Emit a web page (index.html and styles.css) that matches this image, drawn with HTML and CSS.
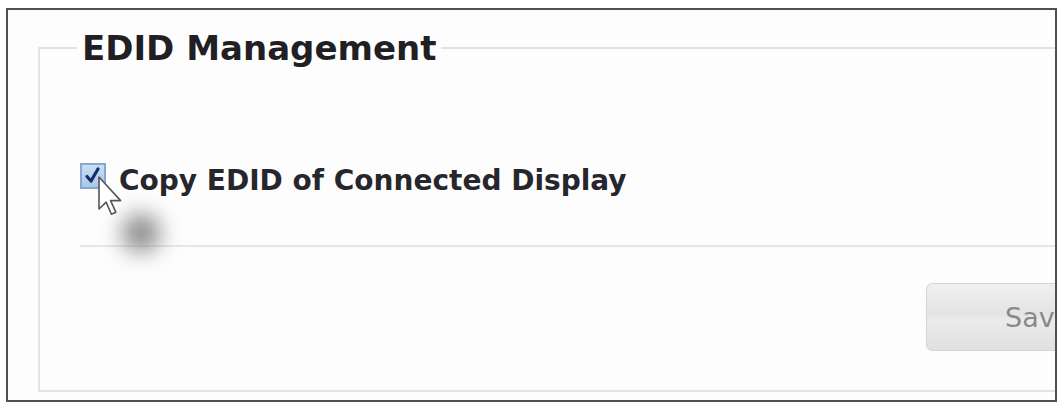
FILE: index.html
```html
<!DOCTYPE html>
<html lang="en">
<head>
  <meta charset="UTF-8">
  <title>EDID Management</title>
  <link rel="stylesheet" href="styles.css">
</head>
<body>
  <div class="frame">
    <fieldset class="panel">
      <legend>EDID Management</legend>

      <label class="option">
        <span class="check">
          <svg width="22" height="22" viewBox="0 0 22 22">
            <path d="M5 11.5 L9 16 L16 4" fill="none" stroke="#1b2c6e" stroke-width="3.2" stroke-linecap="round" stroke-linejoin="round"/>
          </svg>
        </span>
        <span class="option-text">Copy EDID of Connected Display</span>
      </label>

      <div class="divider"></div>

      <div class="actions">
        <button class="save">Save</button>
      </div>
    </fieldset>

    <!-- mouse pointer resting over the checkbox -->
    <div class="pointer-shadow"></div>
    <svg class="pointer" width="28" height="44" viewBox="0 0 14 22">
      <path d="M1 1 L1 17 L4.6 13.6 L7.2 19.6 L9.4 18.6 L6.8 12.8 L11.8 12.8 Z" fill="#fff" stroke="#555" stroke-width="0.8" stroke-linejoin="round"/>
    </svg>
  </div>
</body>
</html>
```

FILE: styles.css
```css
body {
  margin: 0;
  background: #fff;
  font-family: "DejaVu Sans", Verdana, sans-serif;
  color: #222;
}

.frame {
  position: relative;
  box-sizing: border-box;
  width: 1051px;
  height: 394px;
  margin: 8px 0 0 6px;
  padding: 18px 0 0 30px;
  border: 2px solid #505050;
  background: #fdfdfd;
  overflow: hidden;
}

.panel {
  width: 1100px;
  margin: 0;
  padding: 0 0 39px 40px;
  border: 2px solid #e3e3e3;
  min-width: 0;
}

.panel legend {
  margin-left: -3px;
  padding: 0 5px;
  font-size: 34px;
  font-weight: bold;
  line-height: 40px;
  color: #1f1f24;
}

.option {
  display: flex;
  align-items: flex-start;
  margin-top: 95px;
  cursor: pointer;
}

.check {
  display: flex;
  align-items: center;
  justify-content: center;
  box-sizing: border-box;
  width: 26px;
  height: 26px;
  border: 2px solid #86a9d0;
  background: linear-gradient(#c9def3, #a9c8e8);
}

.option-text {
  margin: 2px 0 0 13px;
  font-size: 28px;
  font-weight: bold;
  line-height: 32px;
  color: #26262c;
}

.divider {
  height: 2px;
  margin-top: 48px;
  background: #e6e6e6;
}

.actions {
  padding: 36px 0 0 846px;
}

.save {
  width: 180px;
  height: 68px;
  padding: 0 0 0 78px;
  text-align: left;
  font-family: "DejaVu Sans", Verdana, sans-serif;
  font-size: 27px;
  color: #8a8a8a;
  border: 1px solid #d6d6d6;
  border-radius: 6px;
  background: linear-gradient(#f0f0f0 0%, #e4e4e4 45%, #ebebeb 55%, #e0e0e0 100%);
}

.pointer {
  position: absolute;
  left: 89px;
  top: 165px;
}

.pointer-shadow {
  position: absolute;
  left: 114px;
  top: 204px;
  width: 38px;
  height: 38px;
  border-radius: 50%;
  background: #888;
  filter: blur(11px);
}
```
